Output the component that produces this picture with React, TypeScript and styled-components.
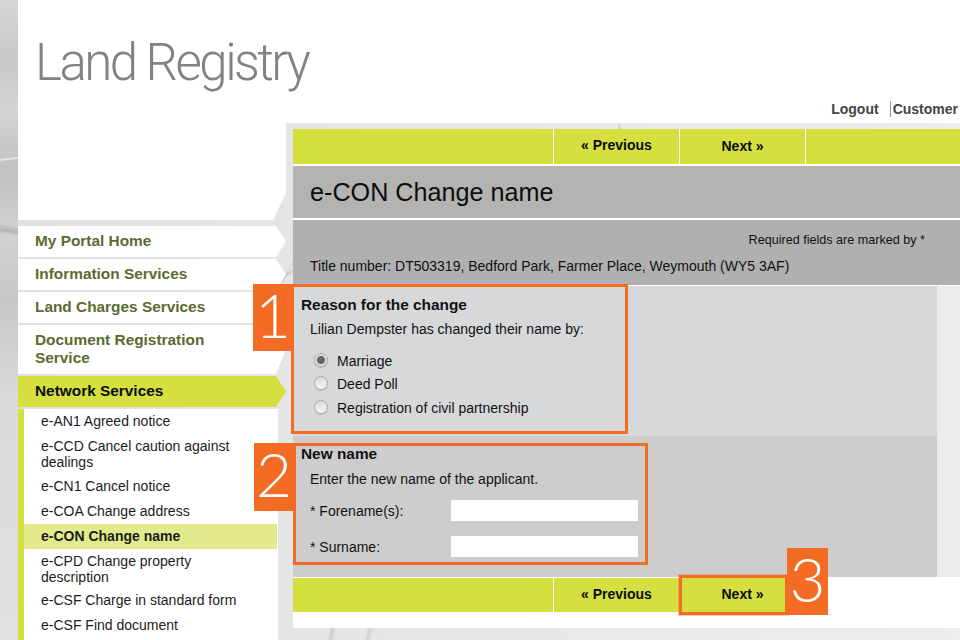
import React from "react";
import styled, { createGlobalStyle } from "styled-components";

const GlobalStyle = createGlobalStyle`
  html, body {
    margin: 0;
    padding: 0;
    background: #e2e3e4;
    font-family: "Liberation Sans", Arial, sans-serif;
  }
  * { box-sizing: border-box; }
`;

const ORANGE = "#f46b24";
const LIME = "#d5e040";

const Page = styled.div`
  width: 960px;
  height: 640px;
  overflow: hidden;
  padding-left: 18px;
  display: grid;
  grid-template-columns: 268px 1fr;
  grid-template-rows: 123px 1fr;
  background:
    linear-gradient(172deg, transparent 0 46%, rgba(245,245,245,0.8) 48%, transparent 51%) 0 130px / 18px 60px no-repeat,
    linear-gradient(8deg, transparent 0 40%, rgba(150,150,150,0.5) 48%, transparent 60%) 0 205px / 18px 50px no-repeat,
    linear-gradient(180deg, #d6d6d6 0, #c9c9c9 60px, #d4d4d4 110px, #c2c2c2 170px, #d2d2d2 235px, #c8c8c8 300px, #dadada 400px, #e0e0e0 640px) 0 0 / 18px 100% no-repeat,
    linear-gradient(118deg, transparent 0 70%, rgba(170,170,170,0.35) 71%, transparent 73%) 270px 180px / 30px 120px no-repeat,
    linear-gradient(150deg, transparent 0 48%, rgba(165,165,165,0.4) 50%, transparent 53%) 278px 225px / 15px 100px no-repeat,
    linear-gradient(100deg, transparent 0 30%, rgba(170,170,170,0.4) 32%, transparent 36% 60%, rgba(170,170,170,0.35) 63%, transparent 66%) 293px 628px / 120px 12px no-repeat,
    linear-gradient(80deg, transparent 0 45%, rgba(150,150,150,0.4) 48%, transparent 52%) 600px 123px / 40px 6px no-repeat,
    linear-gradient(90deg, #dfe0e1 0, #e4e5e6 280px, #ecedef 100%);
`;

const Header = styled.header`
  grid-column: 1 / 3;
  background: #fff;
  display: flex;
  flex-direction: column;
  justify-content: space-between;
  padding: 35px 0 6px 17px;
`;

const Logo = styled.div`
  font-family: Roboto, "Liberation Sans", sans-serif;
  font-weight: 300;
  font-size: 51px;
  line-height: 56px;
  color: #808285;
  letter-spacing: -2.5px;
`;

const Tools = styled.nav`
  display: flex;
  justify-content: flex-end;
  align-items: center;
  font-size: 14px;
  font-weight: bold;
  color: #444;
  line-height: 16px;
`;

const ToolLink = styled.span<{ $divided?: boolean }>`
  white-space: nowrap;
  ${(p) =>
    p.$divided
      ? `border-left: 1px solid #999; padding-left: 2px; margin-left: 11px; margin-right: 2px;`
      : ""}
`;

const Sidebar = styled.aside`
  display: flex;
  flex-direction: column;
  min-height: 0;
`;

const SideTop = styled.div`
  height: 97px;
  margin-bottom: 6px;
  flex-shrink: 0;
  background: #fff;
  clip-path: polygon(0 0, 100% 0, 100% 70px, 255px 100%, 0 100%);
`;

const MenuItem = styled.div<{ $active?: boolean }>`
  flex-shrink: 0;
  margin-bottom: 2px;
  padding: 6px 40px 7px 17px;
  font-size: 15.4px;
  font-weight: bold;
  line-height: 18px;
  color: ${(p) => (p.$active ? "#0c0c0c" : "#5a6b30")};
  background: ${(p) => (p.$active ? LIME : "#fff")};
  clip-path: polygon(0 0, 258px 0, 268px 50%, 258px 100%, 0 100%);
`;

const SubMenu = styled.div`
  flex: 1;
  width: 260px;
  border-left: 6px solid ${LIME};
  background: #fff;
`;

const SubItem = styled.div<{ $active?: boolean; $bottom?: number }>`
  margin-right: 1px;
  padding: 4px 20px ${(p) => p.$bottom ?? 5}px 17px;
  font-size: 14px;
  line-height: 16px;
  color: #1c1c1c;
  font-weight: ${(p) => (p.$active ? "bold" : "normal")};
  background: ${(p) => (p.$active ? "#e3ea8c" : "transparent")};
`;

const Content = styled.main`
  padding: 6px 0 12px 7px;
  min-height: 0;
`;

const Panel = styled.div`
  height: 100%;
  background: #fff;
  display: flex;
  flex-direction: column;
`;

const StepBar = styled.div<{ $narrow?: boolean; $height: number; $top?: number }>`
  display: flex;
  height: ${(p) => p.$height}px;
  margin-top: ${(p) => p.$top ?? 0}px;
  flex-shrink: 0;
  width: ${(p) => (p.$narrow ? "513px" : "100%")};
  background: ${LIME};
`;

const StepCell = styled.div<{ $wide?: boolean; $lift?: number }>`
  position: relative;
  flex-shrink: 0;
  width: ${(p) => (p.$wide ? "261px" : "126px")};
  display: flex;
  align-items: center;
  justify-content: center;
  border-right: 1px solid #fff;
  padding-bottom: ${(p) => p.$lift ?? 0}px;
  font-size: 14px;
  font-weight: bold;
  color: #0c0c0c;
`;

const Title = styled.h1`
  margin: 2px 0 2px;
  height: 52px;
  flex-shrink: 0;
  display: flex;
  align-items: center;
  padding-left: 17px;
  background: #b3b3b1;
  font-size: 25.2px;
  font-weight: normal;
  color: #0d0d0d;
`;

const Meta = styled.div`
  height: 65px;
  margin-bottom: 1px;
  flex-shrink: 0;
  padding: 12px 35px 0 17px;
  background: #b0b0b0;
  color: #111;
`;

const Required = styled.div`
  text-align: right;
  font-size: 12.6px;
  line-height: 16px;
`;

const TitleNumber = styled.div`
  margin-top: 10px;
  font-size: 14px;
  line-height: 16px;
`;

const Section = styled.section<{ $bg: string; $height: number }>`
  height: ${(p) => p.$height}px;
  flex-shrink: 0;
  background: ${(p) => p.$bg};
  border-right: 23px solid #ebecee;
`;

const Callout = styled.div<{ $width: number; $height: number; $top: number; $left: number }>`
  position: relative;
  width: ${(p) => p.$width}px;
  height: ${(p) => p.$height}px;
  margin: ${(p) => p.$top}px 0 0 ${(p) => p.$left}px;
  border: 3px solid ${ORANGE};
  color: #111;
`;

const Badge = styled.div<{ $left: number; $top: number; $width: number; $height: number }>`
  position: absolute;
  left: ${(p) => p.$left}px;
  top: ${(p) => p.$top}px;
  width: ${(p) => p.$width}px;
  height: ${(p) => p.$height}px;
  padding-bottom: 8px;
  background: ${ORANGE};
  color: #fff;
  display: flex;
  align-items: center;
  justify-content: center;
  font-family: Lato, "Liberation Sans", sans-serif;
  font-weight: 300;
  font-size: 62px;
  line-height: 1;
`;

const Heading = styled.h2<{ $top: number; $left: number }>`
  margin: ${(p) => p.$top}px 0 0 ${(p) => p.$left}px;
  font-size: 15.4px;
  line-height: 16px;
  font-weight: bold;
`;

const Lead = styled.p<{ $top: number; $left: number }>`
  margin: ${(p) => p.$top}px 0 0 ${(p) => p.$left}px;
  font-size: 14px;
  line-height: 16px;
`;

const RadioList = styled.div`
  margin: 12px 0 0 20px;
  display: flex;
  flex-direction: column;
`;

const RadioRow = styled.label`
  display: flex;
  align-items: center;
  height: 23.5px;
  font-size: 14px;
`;

const Radio = styled.input.attrs({ type: "radio", name: "reason" })`
  appearance: none;
  margin: 0 9px 0 0;
  width: 14px;
  height: 14px;
  border-radius: 50%;
  flex-shrink: 0;
  position: relative;
  top: -1px;
  border: 1px solid #a9a9ab;
  background: linear-gradient(#d9d9db, #f7f7f8);
  box-shadow: 0 1px 1px rgba(0, 0, 0, 0.12);
  &:checked {
    background: radial-gradient(circle, #66666a 0 3.5px, #d9d9db 4.5px, #f3f3f4 100%);
  }
`;

const FieldRow = styled.label<{ $top: number }>`
  display: grid;
  grid-template-columns: 141px 187px;
  align-items: center;
  margin: ${(p) => p.$top}px 0 0 14px;
  font-size: 14px;
`;

const TextField = styled.input<{ $height: number }>`
  height: ${(p) => p.$height}px;
  width: 100%;
  border: 0;
  padding: 0 4px;
  background: #fff;
`;

const Highlight = styled.div`
  position: absolute;
  left: -1px;
  top: -3px;
  width: 109px;
  height: 40px;
  border: 3px solid ${ORANGE};
  box-shadow: 0 0 0 1px rgba(244, 107, 36, 0.35);
`;

const menu = [
  { label: "My Portal Home" },
  { label: "Information Services" },
  { label: "Land Charges Services" },
  { label: "Document Registration Service" },
  { label: "Network Services", active: true },
];

const subMenu = [
  { label: "e-AN1 Agreed notice" },
  { label: "e-CCD Cancel caution against dealings", bottom: 4 },
  { label: "e-CN1 Cancel notice" },
  { label: "e-COA Change address" },
  { label: "e-CON Change name", active: true },
  { label: "e-CPD Change property description", bottom: 3 },
  { label: "e-CSF Charge in standard form" },
  { label: "e-CSF Find document" },
];

const App: React.FC = () => {
  return (
    <Page>
      <GlobalStyle />
      <Header>
        <Logo>Land Registry</Logo>
        <Tools>
          <ToolLink>Logout</ToolLink>
          <ToolLink $divided>Customer</ToolLink>
        </Tools>
      </Header>

      <Sidebar>
        <SideTop />
        {menu.map((item) => (
          <MenuItem key={item.label} $active={item.active}>
            {item.label}
          </MenuItem>
        ))}
        <SubMenu>
          {subMenu.map((item) => (
            <SubItem key={item.label} $active={item.active} $bottom={item.bottom}>
              {item.label}
            </SubItem>
          ))}
        </SubMenu>
      </Sidebar>

      <Content>
        <Panel>
          <StepBar $height={35}>
            <StepCell $wide />
            <StepCell $lift={3}>« Previous</StepCell>
            <StepCell $lift={2}>Next »</StepCell>
          </StepBar>
          <Title>e-CON Change name</Title>
          <Meta>
            <Required>Required fields are marked by *</Required>
            <TitleNumber>Title number: DT503319, Bedford Park, Farmer Place, Weymouth (WY5 3AF)</TitleNumber>
          </Meta>

          <Section $bg="#d7d8da" $height={150}>
            <Callout $width={337} $height={150} $top={-2} $left={-2}>
              <Badge $left={-41} $top={-3} $width={40} $height={67}>1</Badge>
              <Heading $top={10} $left={7}>Reason for the change</Heading>
              <Lead $top={8} $left={16}>Lilian Dempster has changed their name by:</Lead>
              <RadioList>
                <RadioRow>
                  <Radio defaultChecked />
                  Marriage
                </RadioRow>
                <RadioRow>
                  <Radio />
                  Deed Poll
                </RadioRow>
                <RadioRow>
                  <Radio />
                  Registration of civil partnership
                </RadioRow>
              </RadioList>
            </Callout>
          </Section>

          <Section $bg="#cdcdcd" $height={141}>
            <Callout $width={355} $height={122} $top={7} $left={0}>
              <Badge $left={-42} $top={-3} $width={40} $height={68}>2</Badge>
              <Heading $top={0} $left={5}>New name</Heading>
              <Lead $top={9} $left={14}>Enter the new name of the applicant.</Lead>
              <FieldRow $top={13}>
                * Forename(s):
                <TextField $height={21} />
              </FieldRow>
              <FieldRow $top={15}>
                * Surname:
                <TextField $height={21} />
              </FieldRow>
            </Callout>
          </Section>

          <StepBar $narrow $height={34} $top={1}>
            <StepCell $wide />
            <StepCell $lift={2}>« Previous</StepCell>
            <StepCell $lift={2}>
              Next »
              <Highlight>
                <Badge $left={105} $top={-30} $width={41} $height={67}>3</Badge>
              </Highlight>
            </StepCell>
          </StepBar>
        </Panel>
      </Content>
    </Page>
  );
};

export default App;
